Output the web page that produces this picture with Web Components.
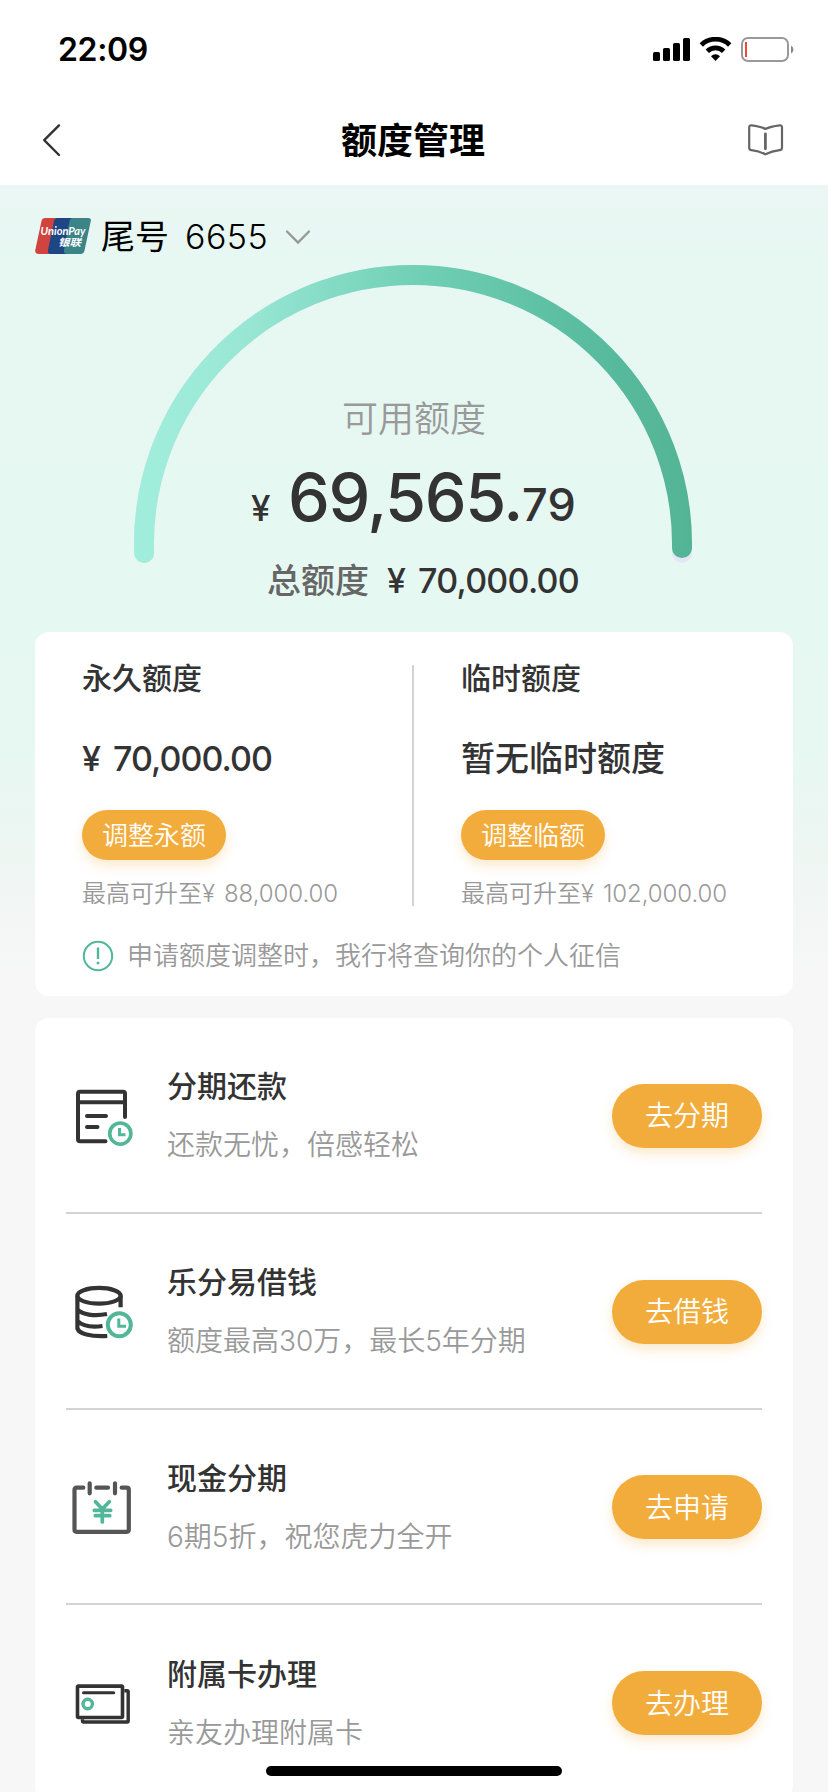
<!DOCTYPE html>
<html lang="zh-CN">
<head>
<meta charset="utf-8">
<title>额度管理</title>
<style>
html,body{margin:0;padding:0}
body{width:828px;height:1792px;overflow:hidden;background:#f7f7f7;font-family:Inter,"Noto Sans CJK SC",sans-serif;color:#333;position:relative}
</style>
</head>
<body>
<limit-page></limit-page>
<script>
const define = (name, html, init) => {
  const t = document.createElement('template');
  t.innerHTML = html;
  customElements.define(name, class extends HTMLElement {
    connectedCallback() {
      if (this.shadowRoot) return;
      this.attachShadow({ mode: 'open' }).append(t.content.cloneNode(true));
      if (init) init(this, this.shadowRoot);
    }
  });
};

/* A single line of text, tracked so that its advance equals the w attribute. */
define('fit-text', `<style>
:host{display:inline-block;white-space:pre;flex:none}
span{display:inline-block;white-space:pre}
</style><span><slot></slot></span>`, (el, root) => {
  const span = root.querySelector('span'), w = +el.getAttribute('w');
  if (!w) return;
  const n = [...el.textContent].length;
  span.style.letterSpacing = (w - span.getBoundingClientRect().width) / n + 'px';
  el.style.width = w + 'px';
});

define('status-bar', `<style>
:host{display:flex;box-sizing:border-box;height:95px;padding:4px 33px 0 58px;align-items:center;justify-content:space-between;background:#fff;color:#000}
fit-text{font-size:32px;line-height:40px;font-weight:600}
svg{display:block}
</style>
<fit-text w="90">22:09</fit-text>
<svg width="142" height="26" viewBox="0 0 142 26">
  <rect x="0" y="15" width="7" height="9" rx="1.6"/><rect x="10" y="11" width="7" height="13" rx="1.6"/>
  <rect x="20" y="6" width="7" height="18" rx="1.6"/><rect x="30" y="1" width="7" height="23" rx="1.6"/>
  <g fill="none" stroke="#000" stroke-width="4.8"><path d="M48.3 7.900a20.500 20.500 0 0 1 28.400 0"/><path d="M54.300 14.200a11.600 11.600 0 0 1 16.400 0"/></g>
  <path d="M58 19.200a6.400 6.400 0 0 1 9 0L62.500 24z"/>
  <rect x="89" y="1" width="46" height="23" rx="6" fill="none" stroke="#999" stroke-width="2"/>
  <rect x="92" y="5" width="2" height="15" fill="#f04a35"/>
  <path d="M138 8.500a4.500 4.500 0 0 1 0 8z" fill="#888"/>
</svg>`);

define('nav-bar', `<style>
:host{display:grid;grid-template-columns:1fr auto 1fr;box-sizing:border-box;height:90px;padding:0 44px 0 42px;align-items:center;background:#fff;color:#000}
svg{display:block;fill:none;stroke-linecap:round;stroke-linejoin:round}
h1{margin:0;font-size:36px;line-height:50px;font-weight:600;position:relative;top:1px}
.book{justify-self:end}
</style>
<svg width="20" height="34" viewBox="0 0 20 34" stroke="#333" stroke-width="2.400"><path d="M17 2.400 2.200 17.200 17 32"/></svg>
<h1>额度管理</h1>
<svg class="book" width="36" height="32" viewBox="0 0 36 32" stroke="#666" stroke-width="2.200"><path d="M17.400 5C13.500 2.700 8 1.800 3.400 1.300Q1.200 1.200 1.200 3.500V23.500Q1.200 26 3.500 26.200C9 26.800 13 28 17.400 30.300C22 28 26 26.800 31.500 26.200Q34 26 34 23.500V3.500Q34 1.200 31.700 1.300C27 1.800 21.500 2.700 17.400 5Z"/><path d="M17.400 9.800V24.800" stroke-width="2.800"/></svg>`);

define('card-picker', `<style>
:host{display:flex;align-items:center;height:44px;padding-left:35px;color:#000}
svg{display:block;flex:none}
.logo{position:relative;top:-1px}
.tail{font-size:34px;line-height:44px;font-weight:400;margin-left:10px}
.num{font-size:34px;line-height:44px;font-weight:350;margin-left:16px}
.chev{margin-left:17px}
</style>
<svg class="logo" width="56" height="36" viewBox="0 0 56 36">
  <path d="M10 0H24L16 36H4Q-.5 36 .3 32L6.500 3Q7.200 0 10 0Z" fill="#d0433e"/>
  <path d="M22.500 0H42L33 36H16Q12.300 36 13 32L19 3Q19.700 0 22.500 0Z" fill="#1f4684"/>
  <path d="M38 0H53Q56.500 0 55.800 3L49.500 32.500Q48.700 36 45.500 36H32Q28.300 36 29 32.500L34.500 3Q35.200 0 38 0Z" fill="#3b8488"/>
  <g fill="#fff" font-style="italic" font-weight="700">
    <text x="5.500" y="17" font-size="11" font-family="Lato,sans-serif" textLength="45" lengthAdjust="spacingAndGlyphs">UnionPay</text>
    <text x="23" y="28" font-size="10" font-family="'Liberation Sans','Noto Sans CJK SC',sans-serif" textLength="23" lengthAdjust="spacingAndGlyphs">银联</text>
  </g>
</svg>
<fit-text class="tail" w="68">尾号</fit-text>
<fit-text class="num" w="83">6655</fit-text>
<svg class="chev" width="26" height="16" viewBox="0 0 26 16" fill="none" stroke="#999" stroke-width="2.400" stroke-linecap="round"><path d="M2 2.500 13 13.500 24 2.500"/></svg>`);

define('limit-gauge', `<style>
:host{display:block;position:relative;height:367px;margin-top:6px}
.arc{position:absolute;left:124px;top:-10px}
.body{position:relative;display:flex;flex-direction:column;padding-top:130px}
.label{align-self:center;font-size:36px;line-height:48px;font-weight:350;color:#999}
.amount{display:flex;align-items:baseline;height:80px;line-height:80px;margin-top:14px;padding-left:251px;font-weight:500}
.yen{font-size:35px}.int{font-size:66.500px;margin-left:14px}.dec{font-size:45px;margin-left:0}
.total{display:flex;font-size:34px;line-height:44px;font-weight:500;margin-top:22px;padding-left:267px}
.total .k{color:#666}.total .y{margin-left:18px}.total .v{margin-left:9px}
</style>
<svg class="arc" width="580" height="320" viewBox="0 0 580 320" fill="none" stroke-width="20" stroke-linecap="round">
  <defs><linearGradient id="g" gradientUnits="userSpaceOnUse" x1="10" y1="0" x2="568" y2="0">
    <stop offset="0" stop-color="#a2eedc"/><stop offset=".2" stop-color="#98e7d4"/><stop offset=".5" stop-color="#71d0b6"/><stop offset=".8" stop-color="#5abd9f"/><stop offset="1" stop-color="#53b395"/></linearGradient></defs>
  <path d="M20.100 298A269 269 0 0 1 289 20A269 269 0 0 1 557.900 298" stroke="#e5e6f5"/>
  <path d="M20.100 298A269 269 0 0 1 289 20A269 269 0 0 1 558 293" stroke="url(#g)"/>
</svg>
<div class="body">
  <fit-text class="label" w="144">可用额度</fit-text>
  <div class="amount"><fit-text class="yen" w="23">¥</fit-text><fit-text class="int" w="234">69,565.</fit-text><fit-text class="dec" w="54">79</fit-text></div>
  <div class="total"><fit-text class="k" w="102">总额度</fit-text><fit-text class="y" w="22">¥</fit-text><fit-text class="v" w="161">70,000.00</fit-text></div>
</div>`);

define('pill-button', `<style>
:host{display:flex;align-items:center;justify-content:center;flex:none;box-sizing:border-box;width:144px;height:50px;padding-top:1px;border-radius:25px;background:#f2ac3c;color:#fff;font-size:26px;font-weight:350;line-height:1;box-shadow:0 6px 12px rgba(242,172,60,.25)}
:host([large]){width:150px;height:64px;border-radius:32px;font-size:28px}
</style><slot></slot>`);

define('limit-column', `<style>
:host{display:block}
div{display:block;width:max-content}
.t{font-size:30px;line-height:40px;font-weight:500}
.v{display:flex;font-size:34px;line-height:50px;font-weight:500;margin-top:36px}
.b{margin-top:26px}
.n{display:flex;font-size:24px;line-height:36px;font-weight:350;color:#999;margin-top:16px}
</style>
<div class="t"><slot name="title"></slot></div>
<div class="v"><slot name="value"></slot></div>
<div class="b"><slot name="action"></slot></div>
<div class="n"><slot name="note"></slot></div>`);

define('limit-card', `<style>
:host{display:block;box-sizing:border-box;margin:0 35px;height:364px;padding:26px 0 0 47px;border-radius:14px;background:#fff}
.cols{display:flex;height:248px}
.cols>limit-column{width:330px}
.rule{width:2px;height:241px;margin:7px 47px 0 0;background:#d3d3d3}
.tip{display:flex;align-items:center;margin-top:29px;font-size:26px;line-height:40px;font-weight:350;color:#999;gap:13px}
.tip span{padding-top:1px}
svg{display:block}
</style>
<div class="cols">
  <limit-column>
    <span slot="title">永久额度</span>
    <fit-text slot="value" w="31">¥</fit-text><fit-text slot="value" w="159">70,000.00</fit-text>
    <pill-button slot="action">调整永额</pill-button>
    <span slot="note">最高可升至</span><fit-text slot="note" w="22">¥ </fit-text><fit-text slot="note" w="114">88,000.00</fit-text>
  </limit-column>
  <div class="rule"></div>
  <limit-column>
    <span slot="title">临时额度</span>
    <span slot="value">暂无临时额度</span>
    <pill-button slot="action">调整临额</pill-button>
    <span slot="note">最高可升至</span><fit-text slot="note" w="22">¥ </fit-text><fit-text slot="note" w="124">102,000.00</fit-text>
  </limit-column>
</div>
<div class="tip">
  <svg width="32" height="32" viewBox="0 0 32 32" fill="none" stroke="#52b798" stroke-width="2"><circle cx="16" cy="16" r="14.200"/><path d="M16 7.500V19" stroke-width="2.400"/><circle cx="16" cy="23" r="1.500" fill="#52b798" stroke="none"/></svg>
  <span>申请额度调整时，我行将查询你的个人征信</span>
</div>`);

const icons = {
  bill: `<g stroke="#333" stroke-width="4"><path d="M59 35V11.700Q59 9.700 57 9.700H14Q12 9.700 12 11.700V57.300Q12 59.300 14 59.300H39.500M12 20.300H59M21 34H40M21 45H31.500"/></g>
    <g stroke="#52b798" stroke-width="3.600"><circle cx="54.300" cy="51.600" r="10.600"/><path d="M53.500 46V52.700H59.500" stroke-linecap="butt" stroke-linejoin="miter" stroke-width="3"/></g>`,
  coins: `<g stroke="#333" stroke-width="4.200" stroke-linecap="butt"><ellipse cx="33" cy="17.800" rx="21.600" ry="7.900"/><path d="M11.400 17.800V50.500C13 55.500 24 59 41.300 58M54.600 17.800V29.300M11.400 31.500C16 36.500 28 38.500 41 36M11.400 43C16 47.500 25 49.500 36.500 48"/></g>
    <g stroke="#52b798" stroke-width="4"><circle cx="53.300" cy="46.700" r="11.500"/><path d="M52.800 40.500V48.200H60" stroke-linecap="butt" stroke-linejoin="miter" stroke-width="3"/></g>`,
  calendar: `<g stroke="#555" stroke-width="4.200"><path d="M17.300 14.700H10.500Q8.500 14.700 8.500 16.700V56.800Q8.500 58.800 10.500 58.800H60.800Q62.800 58.800 62.800 56.800V16.700Q62.800 14.700 60.800 14.700H55.700M30.300 14.700H42M23.700 10.300V20.300M49 10.300V20.300"/></g>
    <g stroke="#52b798" stroke-width="3.700"><path d="M29.500 28.700 36.300 36 43.300 28.700M28.300 37.300H44.700M29.300 42.700H43.700M36.300 36V49"/></g>`,
  cards: `<g stroke="#333"><rect x="11.500" y="17.100" width="45" height="31.400" rx="1" stroke-width="3.600"/><path d="M17.500 23.700H47.700" stroke-width="3"/><path d="M58.300 21.800H61.200Q62.200 21.800 62.200 22.800V52Q62.200 53 61.200 53H17.500Q16.500 53 16.500 52V50.300" stroke-width="3.400" stroke-linecap="butt"/></g>
    <circle cx="21.700" cy="35" r="4.700" stroke="#52b798" stroke-width="3.400"/>`
};

define('service-row', `<style>
:host{display:flex;align-items:center;box-sizing:border-box;height:195.8px;margin:0 31px;box-shadow:inset 0 -2px #d3d3d3}
:host([last]){box-shadow:none}
svg{display:block;flex:none}
.text{flex:1;padding-left:33px}
.t{font-size:30px;line-height:40px;font-weight:500}
.s{font-size:28px;line-height:40px;font-weight:350;color:#999;margin-top:19px}
</style>
<svg width="68" height="68" viewBox="0 0 68 68" fill="none" stroke-linecap="round" stroke-linejoin="round"></svg>
<div class="text"><div class="t"><slot name="title"></slot></div><div class="s"><slot></slot></div></div>
<slot name="action"></slot>`, (el, root) => { root.querySelector('svg').innerHTML = icons[el.getAttribute('icon')]; });

define('service-list', `<style>
:host{display:block;margin:22px 35px 0;border-radius:14px;background:#fff;height:782px}
</style><slot></slot>`);

define('limit-page', `<style>
:host{display:block;position:relative;height:1792px;overflow:hidden}
main{background:linear-gradient(180deg,#ebf7f4 0,#e7f7f2 70px,#e6f8f2 360px,#e7f8f3 560px,#edf6f2 660px,#f3f6f5 730px,#f7f7f7 790px);padding-top:30px}
.home{position:absolute;left:266px;top:1766px;width:296px;height:10px;border-radius:5px;background:#000}
</style>
<status-bar></status-bar>
<nav-bar></nav-bar>
<main>
  <card-picker></card-picker>
  <limit-gauge></limit-gauge>
  <limit-card></limit-card>
  <service-list>
    <service-row icon="bill"><span slot="title">分期还款</span>还款无忧，倍感轻松<pill-button large slot="action">去分期</pill-button></service-row>
    <service-row icon="coins"><span slot="title">乐分易借钱</span>额度最高30万，最长5年分期<pill-button large slot="action">去借钱</pill-button></service-row>
    <service-row icon="calendar"><span slot="title">现金分期</span>6期5折，祝您虎力全开<pill-button large slot="action">去申请</pill-button></service-row>
    <service-row icon="cards" last><span slot="title">附属卡办理</span>亲友办理附属卡<pill-button large slot="action">去办理</pill-button></service-row>
  </service-list>
</main>
<div class="home"></div>`);
</script>
</body>
</html>
